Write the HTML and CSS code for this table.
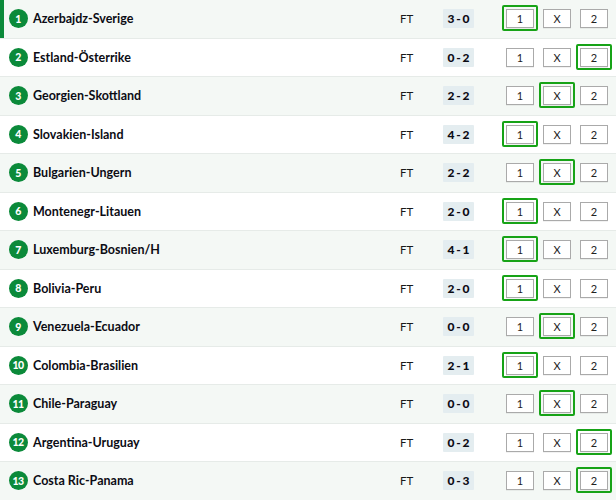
FILE: index.html
```html
<!DOCTYPE html>
<html lang="sv">
<head>
<meta charset="utf-8">
<title>Resultat</title>
<link rel="stylesheet" href="styles.css">
</head>
<body>
<div class="list">
  <div class="row alt active"><span class="num">1</span><span class="name">Azerbajdz-Sverige</span><span class="ft">FT</span><span class="score">3 - 0</span><div class="picks"><span class="btn sel">1</span><span class="btn">X</span><span class="btn">2</span></div></div>
  <div class="row"><span class="num">2</span><span class="name">Estland-Österrike</span><span class="ft">FT</span><span class="score">0 - 2</span><div class="picks"><span class="btn">1</span><span class="btn">X</span><span class="btn sel">2</span></div></div>
  <div class="row alt"><span class="num">3</span><span class="name">Georgien-Skottland</span><span class="ft">FT</span><span class="score">2 - 2</span><div class="picks"><span class="btn">1</span><span class="btn sel">X</span><span class="btn">2</span></div></div>
  <div class="row"><span class="num">4</span><span class="name">Slovakien-Island</span><span class="ft">FT</span><span class="score">4 - 2</span><div class="picks"><span class="btn sel">1</span><span class="btn">X</span><span class="btn">2</span></div></div>
  <div class="row alt"><span class="num">5</span><span class="name">Bulgarien-Ungern</span><span class="ft">FT</span><span class="score">2 - 2</span><div class="picks"><span class="btn">1</span><span class="btn sel">X</span><span class="btn">2</span></div></div>
  <div class="row"><span class="num">6</span><span class="name">Montenegr-Litauen</span><span class="ft">FT</span><span class="score">2 - 0</span><div class="picks"><span class="btn sel">1</span><span class="btn">X</span><span class="btn">2</span></div></div>
  <div class="row alt"><span class="num">7</span><span class="name">Luxemburg-Bosnien/H</span><span class="ft">FT</span><span class="score">4 - 1</span><div class="picks"><span class="btn sel">1</span><span class="btn">X</span><span class="btn">2</span></div></div>
  <div class="row"><span class="num">8</span><span class="name">Bolivia-Peru</span><span class="ft">FT</span><span class="score">2 - 0</span><div class="picks"><span class="btn sel">1</span><span class="btn">X</span><span class="btn">2</span></div></div>
  <div class="row alt"><span class="num">9</span><span class="name">Venezuela-Ecuador</span><span class="ft">FT</span><span class="score">0 - 0</span><div class="picks"><span class="btn">1</span><span class="btn sel">X</span><span class="btn">2</span></div></div>
  <div class="row"><span class="num">10</span><span class="name">Colombia-Brasilien</span><span class="ft">FT</span><span class="score">2 - 1</span><div class="picks"><span class="btn sel">1</span><span class="btn">X</span><span class="btn">2</span></div></div>
  <div class="row alt"><span class="num">11</span><span class="name">Chile-Paraguay</span><span class="ft">FT</span><span class="score">0 - 0</span><div class="picks"><span class="btn">1</span><span class="btn sel">X</span><span class="btn">2</span></div></div>
  <div class="row"><span class="num">12</span><span class="name">Argentina-Uruguay</span><span class="ft">FT</span><span class="score">0 - 2</span><div class="picks"><span class="btn">1</span><span class="btn">X</span><span class="btn sel">2</span></div></div>
  <div class="row alt"><span class="num">13</span><span class="name">Costa Ric-Panama</span><span class="ft">FT</span><span class="score">0 - 3</span><div class="picks"><span class="btn">1</span><span class="btn">X</span><span class="btn sel">2</span></div></div>
</div>
</body>
</html>
```
FILE: styles.css
```css
* { box-sizing: border-box; }
html, body { margin: 0; padding: 0; background: #fff; }
body { font-family: "Lato", "Liberation Sans", sans-serif; color: #111; }

.list { display: flex; flex-direction: column; }

.row {
  display: flex;
  align-items: center;
  height: 38.5px;
  padding: 0 8px 0 9px;
  border-bottom: 1px solid #e6ebe8;
  background: #fff;
}
.row.alt { background: #f4f8f5; }
.row.active { box-shadow: inset 4px 0 0 #0b8a3a; }

.num {
  width: 19px;
  height: 19px;
  border-radius: 50%;
  background: #0b8a3a;
  color: #fff;
  font-weight: 900;
  font-size: 10.5px;
  display: flex;
  align-items: center;
  justify-content: center;
  flex: none;
  letter-spacing: -0.5px;
  margin-left: -0.5px;
}

.name {
  flex: 1;
  margin-left: 5.5px;
  font-weight: 700;
  font-size: 12.5px;
  color: #0c0c14;
}

.ft {
  width: 43px;
  font-size: 11.5px;
  color: #1a1a1a;
}

.score {
  width: 31px;
  height: 19px;
  background: #e4edf0;
  font-weight: 900;
  font-size: 12px;
  display: flex;
  align-items: center;
  justify-content: center;
  color: #0c0c14;
  word-spacing: -1px;
  border-radius: 1px;
}

.picks {
  display: flex;
  gap: 9px;
  margin-left: 32px;
}

.btn {
  position: relative;
  width: 28px;
  height: 19px;
  border: 1px solid #aaaaaa;
  background: #fff;
  font-size: 11px;
  color: #222;
  display: flex;
  align-items: center;
  justify-content: center;
  box-shadow: 0 1px 0 rgba(0,0,0,0.05);
}
.btn.sel::after {
  content: "";
  position: absolute;
  left: -5px;
  right: -5px;
  top: -5px;
  bottom: -4px;
  border: 2px solid #17a317;
  border-radius: 2px;
}
```
